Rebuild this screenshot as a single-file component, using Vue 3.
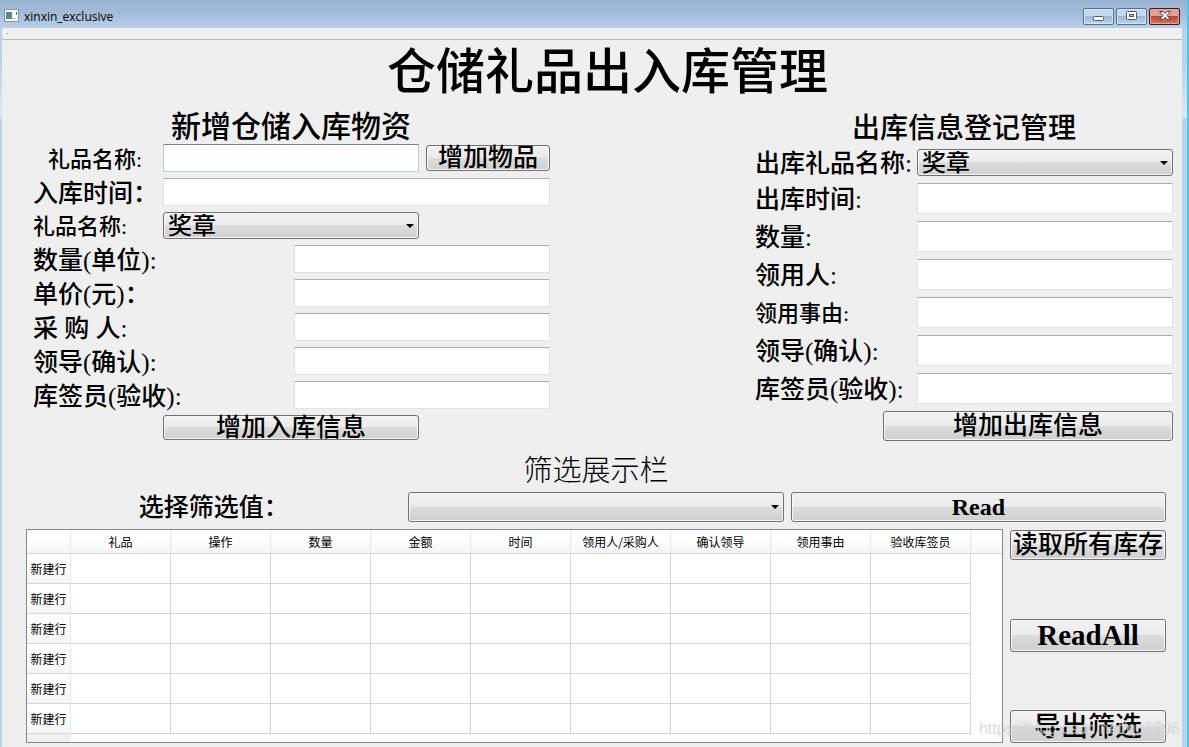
<script setup>
import { ref } from 'vue'

const gifts = ['奖章']
const inGift = ref('奖章')
const outGift = ref('奖章')
const filterValue = ref('')

const inFields = [
  { id: 'in-qty', label: '数量(单位):' },
  { id: 'in-price', label: '单价(元)：' },
  { id: 'in-buyer', label: '采 购 人:' },
  { id: 'in-leader', label: '领导(确认):' },
  { id: 'in-keeper', label: '库签员(验收):' },
]
const outFields = [
  { id: 'out-time', label: '出库时间:' },
  { id: 'out-qty', label: '数量:' },
  { id: 'out-user', label: '领用人:' },
  { id: 'out-reason', label: '领用事由:', small: true },
  { id: 'out-leader', label: '领导(确认):' },
  { id: 'out-keeper', label: '库签员(验收):' },
]
const columns = ['礼品', '操作', '数量', '金额', '时间', '领用人/采购人', '确认领导', '领用事由', '验收库签员']
const rowCount = 6
</script>

<template>
  <div class="window">
    <header class="titlebar">
      <svg class="app-icon" width="16" height="14" viewBox="0 0 16 14">
        <rect x="0.5" y="0.5" width="14" height="12" fill="#fafafa" stroke="#8a949c" />
        <rect x="2" y="3" width="6" height="7" fill="#4f8d8a" />
        <rect x="9" y="9" width="3" height="1" fill="#b5bdc0" />
        <rect x="12" y="3" width="1" height="3" fill="#55606a" />
      </svg>
      <span class="caption">xinxin_exclusive</span>
      <div class="controls">
        <button class="ctl" type="button" aria-label="最小化">
          <svg width="14" height="12" viewBox="0 0 14 12">
            <rect x="1.5" y="6.5" width="10" height="4" rx="1" fill="#fff" stroke="#4d5968" />
          </svg>
        </button>
        <button class="ctl" type="button" aria-label="最大化">
          <svg width="14" height="12" viewBox="0 0 14 12">
            <rect x="1.5" y="1.5" width="10" height="8" rx="1" fill="#fff" stroke="#4d5968" />
            <rect x="4.5" y="4.5" width="4" height="2" fill="#a9c3e0" stroke="#4d5968" />
          </svg>
        </button>
        <button class="ctl close" type="button" aria-label="关闭">
          <svg width="14" height="12" viewBox="0 0 14 12">
            <path
              d="M1.500 1.500H5.100L7 3.600L8.900 1.500H12.500L9 5.500L12.500 9.500H8.900L7 7.400L5.100 9.500H1.500L5 5.500z"
              fill="#fff"
              stroke="#5b4048"
            />
          </svg>
        </button>
      </div>
    </header>

    <main class="client">
      <div class="menubar"><span class="dot"></span></div>
      <h1>仓储礼品出入库管理</h1>

      <div class="panels">
        <form class="panel in" @submit.prevent>
          <h2 class="wide">新增仓储入库物资</h2>
          <div class="row">
            <label class="lead small indent" for="new-gift">礼品名称:</label>
            <input id="new-gift" class="focused grow" type="text" />
            <button class="btn add" type="button">增加物品</button>
          </div>
          <div class="row">
            <label class="lead" for="in-time">入库时间：</label>
            <input id="in-time" class="grow" type="text" />
          </div>
          <div class="row">
            <label class="lead small" for="in-gift">礼品名称:</label>
            <span class="combo grow">
              <select id="in-gift" v-model="inGift">
                <option v-for="g in gifts" :key="g">{{ g }}</option>
              </select>
            </span>
            <span class="spacer"></span>
          </div>
          <div v-for="f in inFields" :key="f.id" class="row">
            <label class="grow" :for="f.id">{{ f.label }}</label>
            <input :id="f.id" class="fixed" type="text" />
          </div>
          <div class="row">
            <span class="lead"></span>
            <button class="btn grow submit-in" type="submit">增加入库信息</button>
            <span class="spacer"></span>
          </div>
        </form>

        <form class="panel out" @submit.prevent>
          <h2>出库信息登记管理</h2>
          <div class="row">
            <label class="grow" for="out-gift">出库礼品名称:</label>
            <span class="combo fixed">
              <select id="out-gift" v-model="outGift">
                <option v-for="g in gifts" :key="g">{{ g }}</option>
              </select>
            </span>
          </div>
          <div v-for="f in outFields" :key="f.id" class="row">
            <label class="grow" :class="{ small: f.small }" :for="f.id">{{ f.label }}</label>
            <input :id="f.id" class="fixed" type="text" />
          </div>
          <div class="row end">
            <button class="btn submit-out" type="submit">增加出库信息</button>
          </div>
        </form>
      </div>

      <section class="results">
        <h3>筛选展示栏</h3>
        <div class="filter">
          <label for="filter">选择筛选值：</label>
          <span class="combo">
            <select id="filter" v-model="filterValue">
              <option value=""></option>
            </select>
          </span>
          <button class="btn latin" type="button">Read</button>
        </div>
        <div class="bottom">
          <div class="table-frame">
            <table>
              <thead>
                <tr>
                  <th class="corner"></th>
                  <th v-for="c in columns" :key="c" class="col" scope="col">{{ c }}</th>
                  <th></th>
                </tr>
              </thead>
              <tbody>
                <tr v-for="n in rowCount" :key="n">
                  <th scope="row">新建行</th>
                  <td v-for="c in columns" :key="c"></td>
                  <td class="rest"></td>
                </tr>
              </tbody>
            </table>
            <div class="stub"></div>
          </div>
          <div class="actions">
            <button class="btn" type="button">读取所有库存</button>
            <button class="btn tall latin large" type="button">ReadAll</button>
            <button class="btn tall export" type="button">导出筛选</button>
          </div>
        </div>
      </section>
    </main>
    <div class="watermark">https://blog.csdn.net/qu1996</div>
  </div>
</template>

<style>
body {
  margin: 0;
  background: #b9d1ea;
}
</style>

<style scoped>
* {
  box-sizing: border-box;
}
.window {
  position: relative;
  min-height: 100vh;
  display: flex;
  flex-direction: column;
  padding: 0 5px 0 2px;
  border-right: 2px solid #45c8f0;
  background: linear-gradient(#b9d1ea 60px, #dbe8f5 117px, #b9d1ea 119px);
  color: #000;
  font-family: "Liberation Serif", "Noto Sans CJK SC", sans-serif;
}
.titlebar {
  display: flex;
  align-items: center;
  height: 28px;
  margin: 0 -5px 0 -2px;
  padding: 4px 7px 0 4px;
  background: linear-gradient(#98b3d0, #a3bcd9 50%, #b9d1ea);
}
.app-icon {
  flex: none;
}
.caption {
  flex: 1;
  padding: 2px 0 0 4px;
  font: 12px/16px "Open Sans", "Noto Sans", sans-serif;
}
.controls {
  display: flex;
  gap: 2px;
}
.ctl {
  display: flex;
  align-items: center;
  justify-content: center;
  width: 31px;
  height: 17px;
  padding: 0;
  border: 1px solid #56708f;
  border-radius: 2px;
  background: linear-gradient(#c4d7eb 45%, #9db8d5 50%, #bcd3ea);
  box-shadow: inset 0 0 0 1px #d5e4f3;
}
.ctl.close {
  border-color: #46151a;
  background: linear-gradient(#e0a093 45%, #bf4130 50%, #d07a62);
  box-shadow: inset 0 0 0 1px #e0a79c;
}
.client {
  flex: 1;
  background: #efefef;
}
.menubar {
  display: flex;
  height: 12px;
  padding: 5px;
  border-bottom: 1px solid #b4b8b6;
  background: #f0f0f0;
}
.dot {
  width: 1px;
  height: 1px;
  background: #909090;
}
h1,
h2,
h3 {
  margin: 0;
  text-align: center;
  white-space: nowrap;
}
h1 {
  padding-left: 31px;
  font-size: 49px;
  font-weight: 500;
  line-height: 66px;
}
.panels {
  display: flex;
  justify-content: space-between;
  padding: 6px 9px 0 31px;
}
.panel {
  display: flex;
  flex-direction: column;
  min-width: 0;
}
.in {
  flex: 0 1 517px;
  gap: 6px;
}
.out {
  flex: 0 1 418px;
  gap: 7px;
}
h2 {
  height: 30px;
  font-size: 28px;
  font-weight: 500;
  line-height: 34px;
}
h2.wide {
  height: 26px;
  padding-right: 1px;
  font-size: 30px;
  line-height: 30px;
}
.row {
  display: flex;
  align-items: center;
  gap: 7px;
}
.end {
  justify-content: flex-end;
}
label {
  padding-top: 2px;
  font-size: 25px;
  font-weight: 500;
  line-height: 25px;
  white-space: nowrap;
}
label.small {
  font-size: 22px;
}
.lead {
  flex: none;
  width: 123px;
}
.indent {
  padding-left: 15px;
}
.grow {
  flex: 1;
  min-width: 0;
}
.fixed {
  flex: none;
  width: 256px;
}
.spacer {
  width: 124px;
}
input {
  height: 28px;
  padding: 0 4px;
  border: 1px solid #e3e3e3;
  border-top-color: #abadb3;
  background: #fff;
  font-size: 20px;
}
input.focused {
  border-color: #b5cfe7;
  border-top-color: #5a8aa8;
}
.out input {
  height: 31px;
}
.btn,
.combo select {
  border: 1px solid #707070;
  border-radius: 3px;
  background: linear-gradient(#f2f2f2, #ebebeb 49%, #dcdcdc 50%, #cfcfcf);
  box-shadow: inset 0 0 0 1px #f7f7f7;
  color: #000;
  font-family: inherit;
  font-size: 25px;
  font-weight: 500;
  line-height: 24px;
  white-space: nowrap;
}
.btn {
  height: 30px;
  padding: 0;
}
.add {
  width: 124px;
  height: 26px;
}
.submit-in {
  height: 25px;
}
.submit-out {
  width: 290px;
}
.combo {
  position: relative;
  display: flex;
}
.combo select {
  width: 100%;
  height: 27px;
  padding: 0 20px 0 4px;
  font-size: 24px;
  appearance: none;
}
.combo::after {
  content: "";
  position: absolute;
  right: 5px;
  top: 50%;
  margin-top: -2px;
  border: 4px solid transparent;
  border-top-color: #000;
  border-bottom: 0;
  pointer-events: none;
}
.results {
  padding: 10px 16px 4px 24px;
}
h3 {
  font-size: 29px;
  font-weight: 300;
  line-height: 41px;
}
.filter {
  display: grid;
  grid-template-columns: repeat(3, 1fr);
  gap: 7px;
}
.filter label {
  text-align: center;
  line-height: 28px;
}
.combo #filter {
  height: 30px;
}
.latin {
  font-size: 24px;
  font-weight: 700;
}
.large {
  font-size: 29px;
}
.bottom {
  display: flex;
  gap: 7px;
  padding-top: 7px;
}
.table-frame {
  flex: 1;
  border: 1px solid #828790;
  background: #fff;
}
table {
  width: 100%;
  border-collapse: separate;
  border-spacing: 0;
  table-layout: fixed;
  font: 12px/16px "Noto Sans CJK SC", sans-serif;
}
th,
td {
  height: 30px;
  padding: 0;
  border-right: 1px solid #d5d5d5;
  border-bottom: 1px solid #d5d5d5;
  font-weight: 400;
  white-space: nowrap;
}
thead th {
  height: 24px;
  border-right-color: #e2e6ea;
  background: linear-gradient(#fff, #fff 40%, #f4f5f6);
}
thead th:last-child,
td.rest {
  border-right: 0;
}
td.rest {
  border-bottom: 0;
}
.corner {
  width: 44px;
}
.col {
  width: 100px;
}
tbody th {
  background: linear-gradient(#fff, #fff 40%, #f4f5f6);
  border-right-color: #e2e6ea;
}
.stub {
  width: 44px;
  height: 8px;
  background: #f0f0f0;
}
.actions {
  display: flex;
  flex-direction: column;
  justify-content: space-between;
  width: 156px;
  padding-top: 1px;
}
.tall {
  height: 33px;
}
.export {
  font-size: 27px;
}
.watermark {
  position: absolute;
  right: 7px;
  bottom: 8px;
  font: 16px/20px "Liberation Sans", sans-serif;
  color: rgba(255, 255, 255, 0.5);
  text-shadow: 0 0 1px rgba(150, 150, 150, 0.6);
  pointer-events: none;
}
</style>
